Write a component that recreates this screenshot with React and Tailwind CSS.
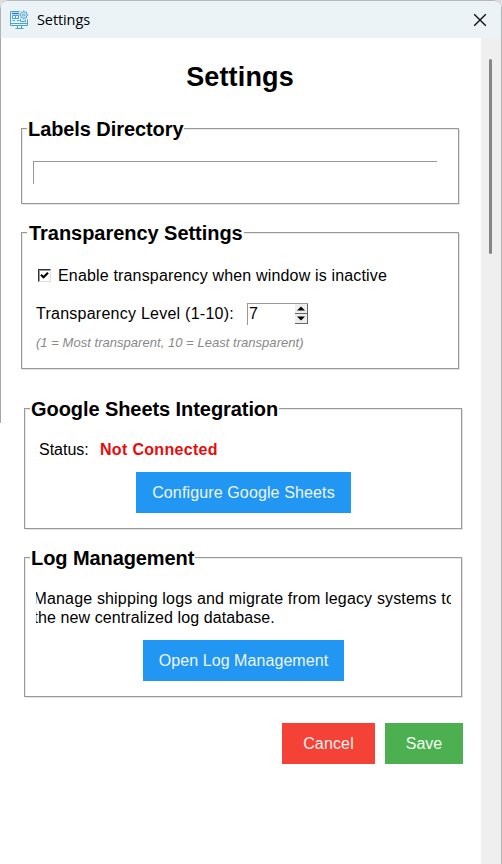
function Group({ title, className, titleClass, children }) {
  return (
    <fieldset className={`w-[438px] border border-[#999] px-0 shadow-[1px_1px_0_#e3e3e3,inset_1px_1px_0_#e9e9e9] ${className}`}>
      <legend className={`ml-[5px] h-[21px] whitespace-nowrap bg-white text-[20px] leading-[22px] font-bold ${titleClass}`}>{title}</legend>
      {children}
    </fieldset>
  );
}

function AppIcon() {
  return (
    <svg width="20" height="20" viewBox="0 0 20 20" fill="none" stroke="#45a3d9" strokeWidth="1">
      <path d="M10.500 1.500H1.500V15.500H18.500V9.500M2 13.500H18M8.500 16V18M12.500 16V18M6.500 18.500H14.500" />
      <path d="M3 3.500H10" stroke="#2c7fb8" strokeWidth="1.300" />
      <path d="M3.500 5.500H9.500V8.500H3.500ZM6.500 5.500V8.500M3.500 10.500H6M8 10.500H10.500M11.500 9V11.500H16.500V9.500" />
      <circle cx="14.800" cy="5" r="3.300" />
      <circle cx="14.800" cy="5" r="1.200" />
      <path d="M14.800 0.500V1.700M14.800 8.300V9.500M10.300 5H11.500M18.100 5H19.300M11.600 1.800L12.500 2.700M17.100 7.300L18 8.200M18 1.800L17.100 2.700M11.600 8.200L12.500 7.300" />
    </svg>
  );
}

export default function App() {
  return (
    <div className="h-[864px] w-[502px] overflow-hidden bg-[#dedede] font-['Liberation_Sans',Arial,sans-serif] text-[16px] text-black">
      <div className="flex h-full flex-col overflow-hidden rounded-tl-[9px] rounded-tr-[9px] border-t border-[#b4b7b9] bg-white">
        <header className="flex h-[37px] shrink-0 items-center border-x border-[#b0b3b5] bg-[#ebf3f7] pr-[14px] pl-[8px]">
          <AppIcon />
          <span className="ml-[8px] font-['Open_Sans','Noto_Sans',sans-serif] text-[14.500px] leading-5 tracking-[-0.1px]">Settings</span>
          <svg className="ml-auto" width="14" height="14" viewBox="0 0 14 14" fill="none" stroke="#111" strokeWidth="1.400">
            <path d="M1.200 1.200L12.800 12.800M12.800 1.200L1.200 12.800" />
          </svg>
        </header>
        <div className="flex min-h-0 grow">
          <div className="h-[385px] w-px shrink-0 bg-[#a7a7a7]" />
          <main className="flex w-[480px] shrink-0 flex-col">
            <h1 className="mt-[22px] h-[32px] pr-[2px] text-center text-[27px] leading-[34px] font-bold tracking-[0.15px]">Settings</h1>
            <Group title="Labels Directory" className="mt-[26px] ml-[20px] h-[86px]" titleClass="w-[157px] pl-[1px] tracking-[-0.08px]">
              <div className="mt-[22px] ml-[11px] h-[23px] w-[404px] border-t border-l border-[#999]" />
            </Group>
            <Group title="Transparency Settings" className="mt-[18px] ml-[20px] h-[147px]" titleClass="w-[217px] pl-[2px] tracking-[-0.04px]">
              <div className="mt-[23px] ml-[16px] flex h-[20px] items-center">
                <div className="mb-[2px] flex size-[13px] items-center justify-center border border-t-[#333] border-r-[#ddd] border-b-[#ddd] border-l-[#333] shadow-[inset_1px_1px_0_#999]">
                  <svg width="9" height="9" viewBox="0 0 9 9" fill="none" stroke="#000" strokeWidth="2.200">
                    <path d="M1 3.800L3.500 6.300L8 1.800" />
                  </svg>
                </div>
                <span className="ml-[7px] tracking-[0.165px] whitespace-nowrap">Enable transparency when window is inactive</span>
              </div>
              <div className="mt-[16px] ml-[14px] flex h-[23px] items-center">
                <span className="w-[211px] tracking-[0.25px] whitespace-nowrap">Transparency Level (1-10):</span>
                <div className="flex h-[22px] w-[61px] border-t border-l border-[#999]">
                  <span className="grow pl-[1px] leading-[20px]">7</span>
                  <div className="flex h-[20px] w-[13px] flex-col">
                    {["M2 6.500H10L6 2.500Z", "M2 2.500H10L6 6.500Z"].map((d) => (
                      <div key={d} className="h-[10px] border-r border-b border-[#666] bg-[#eee]">
                        <svg width="12" height="9" viewBox="0 0 12 9"><path d={d} /></svg>
                      </div>
                    ))}
                  </div>
                </div>
              </div>
              <p className="mt-[9px] ml-[14px] text-[13px] leading-[18px] tracking-[0.035px] whitespace-nowrap text-[#888] italic">(1 = Most transparent, 10 = Least transparent)</p>
            </Group>
            <Group title="Google Sheets Integration" className="mt-[29px] ml-[23px] h-[131px]" titleClass="w-[249px] pl-[1px] tracking-[-0.07px]">
              <div className="mt-[21px] ml-[14px] flex h-[20px] items-center leading-[20px]">
                <span className="w-[61px]">Status:</span>
                <span className="font-bold tracking-[0.32px] text-[#e80b0b]">Not Connected</span>
              </div>
              <button className="mt-[12px] ml-[111px] block h-[41px] w-[215px] bg-[#2196f3] tracking-[0.13px] whitespace-nowrap text-[#eef7ff]">Configure Google Sheets</button>
            </Group>
            <Group title="Log Management" className="mt-[18px] ml-[23px] h-[150px]" titleClass="w-[165px] pl-[1px] tracking-[-0.08px]">
              <p className="mt-[21px] ml-[11px] h-[39px] w-[415px] overflow-hidden leading-[19px] whitespace-nowrap">
                <span className="-ml-[2.500px] block tracking-[0.16px]">Manage shipping logs and migrate from legacy systems to</span>
                <span className="-ml-[2.500px] block tracking-[0.09px]">the new centralized log database.</span>
              </p>
              <button className="mt-[12px] ml-[118px] block h-[41px] w-[201px] bg-[#2196f3] tracking-[0.07px] whitespace-nowrap text-[#eef7ff]">Open Log Management</button>
            </Group>
            <div className="mt-[26px] mr-[18px] flex justify-end gap-[10px]">
              <button className="h-[41px] w-[93px] bg-[#f44336] tracking-[0.15px] text-[#fff2f0]">Cancel</button>
              <button className="h-[41px] w-[78px] bg-[#4caf50] text-[#f2fff2]">Save</button>
            </div>
          </main>
          <aside className="grow border-r border-[#b5b5b5] bg-[#efefef] pt-[21px] pl-[8px]">
            <div className="h-[195px] w-[3px] rounded-full bg-[#858585]" />
          </aside>
        </div>
      </div>
    </div>
  );
}
